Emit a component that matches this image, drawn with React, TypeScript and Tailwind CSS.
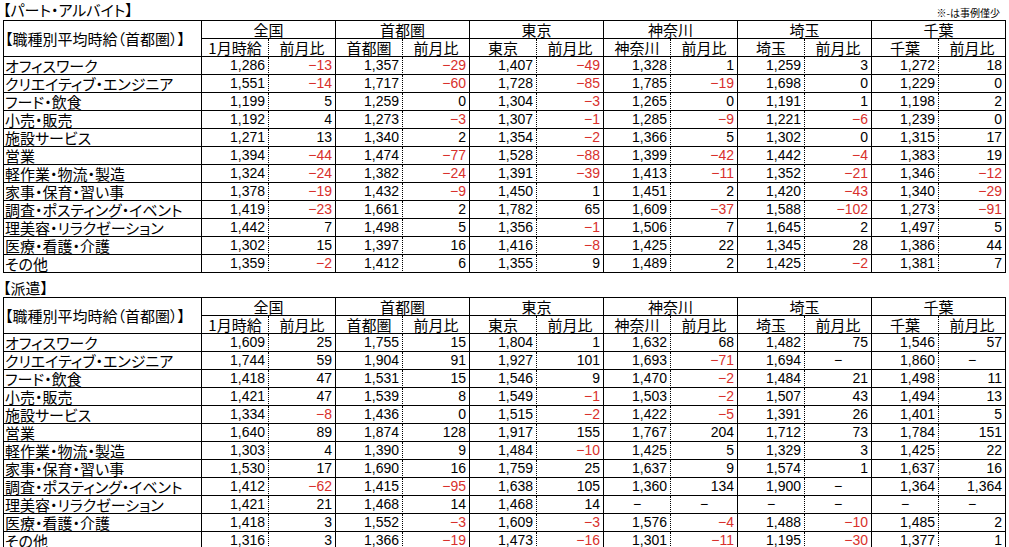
const regions = ["全国", "首都圏", "東京", "神奈川", "埼玉", "千葉"];
const firstHeads = ["1月時給", "首都圏", "東京", "神奈川", "埼玉", "千葉"];

// values: "-" = 事例僅少, leading "-" = negative (red)
const partRows: string[][] = [
  ["オフィスワーク", "1,286", "-13", "1,357", "-29", "1,407", "-49", "1,328", "1", "1,259", "3", "1,272", "18"],
  ["クリエイティブ・エンジニア", "1,551", "-14", "1,717", "-60", "1,728", "-85", "1,785", "-19", "1,698", "0", "1,229", "0"],
  ["フード・飲食", "1,199", "5", "1,259", "0", "1,304", "-3", "1,265", "0", "1,191", "1", "1,198", "2"],
  ["小売・販売", "1,192", "4", "1,273", "-3", "1,307", "-1", "1,285", "-9", "1,221", "-6", "1,239", "0"],
  ["施設サービス", "1,271", "13", "1,340", "2", "1,354", "-2", "1,366", "5", "1,302", "0", "1,315", "17"],
  ["営業", "1,394", "-44", "1,474", "-77", "1,528", "-88", "1,399", "-42", "1,442", "-4", "1,383", "19"],
  ["軽作業・物流・製造", "1,324", "-24", "1,382", "-24", "1,391", "-39", "1,413", "-11", "1,352", "-21", "1,346", "-12"],
  ["家事・保育・習い事", "1,378", "-19", "1,432", "-9", "1,450", "1", "1,451", "2", "1,420", "-43", "1,340", "-29"],
  ["調査・ポスティング・イベント", "1,419", "-23", "1,661", "2", "1,782", "65", "1,609", "-37", "1,588", "-102", "1,273", "-91"],
  ["理美容・リラクゼーション", "1,442", "7", "1,498", "5", "1,356", "-1", "1,506", "7", "1,645", "2", "1,497", "5"],
  ["医療・看護・介護", "1,302", "15", "1,397", "16", "1,416", "-8", "1,425", "22", "1,345", "28", "1,386", "44"],
  ["その他", "1,359", "-2", "1,412", "6", "1,355", "9", "1,489", "2", "1,425", "-2", "1,381", "7"],
];

const hakenRows: string[][] = [
  ["オフィスワーク", "1,609", "25", "1,755", "15", "1,804", "1", "1,632", "68", "1,482", "75", "1,546", "57"],
  ["クリエイティブ・エンジニア", "1,744", "59", "1,904", "91", "1,927", "101", "1,693", "-71", "1,694", "-", "1,860", "-"],
  ["フード・飲食", "1,418", "47", "1,531", "15", "1,546", "9", "1,470", "-2", "1,484", "21", "1,498", "11"],
  ["小売・販売", "1,421", "47", "1,539", "8", "1,549", "-1", "1,503", "-2", "1,507", "43", "1,494", "13"],
  ["施設サービス", "1,334", "-8", "1,436", "0", "1,515", "-2", "1,422", "-5", "1,391", "26", "1,401", "5"],
  ["営業", "1,640", "89", "1,874", "128", "1,917", "155", "1,767", "204", "1,712", "73", "1,784", "151"],
  ["軽作業・物流・製造", "1,303", "4", "1,390", "9", "1,484", "-10", "1,425", "5", "1,329", "3", "1,425", "22"],
  ["家事・保育・習い事", "1,530", "17", "1,690", "16", "1,759", "25", "1,637", "9", "1,574", "1", "1,637", "16"],
  ["調査・ポスティング・イベント", "1,412", "-62", "1,415", "-95", "1,638", "105", "1,360", "134", "1,900", "-", "1,364", "1,364"],
  ["理美容・リラクゼーション", "1,421", "21", "1,468", "14", "1,468", "14", "-", "-", "-", "-", "-", "-"],
  ["医療・看護・介護", "1,418", "3", "1,552", "-3", "1,609", "-3", "1,576", "-4", "1,488", "-10", "1,485", "2"],
  ["その他", "1,316", "3", "1,366", "-19", "1,473", "-16", "1,301", "-11", "1,195", "-30", "1,377", "1"],
];

const jp = "font-['Noto_Sans_CJK_JP',sans-serif] [font-feature-settings:'palt']";
const num = "font-['Liberation_Sans',Arial,sans-serif] text-[14px]";
const dotted = "border-r border-b border-black [border-right-style:dotted]!";
const solid = "border-r border-b border-black";

function Value({ v, first }: { v: string; first: boolean }) {
  const edge = first ? dotted : solid;
  if (v === "-") {
    return <td className={`${edge} ${num} p-0 text-center`}>−</td>;
  }
  const neg = v.startsWith("-");
  return (
    <td className={`${edge} ${num} p-0 pr-[3px] text-right ${neg ? "text-[#d8302c]" : "text-black"}`}>
      {neg ? "−" + v.slice(1) : v}
    </td>
  );
}

function WageTable({ rows }: { rows: string[][] }) {
  return (
    <table className="ml-[3px] w-[1002px] table-fixed border-separate border-spacing-0 border-l border-t border-black leading-[17px] text-black">
      <colgroup>
        <col className="w-[198px]" />
        {Array.from({ length: 12 }).map((_, i) => (
          <col key={i} className="w-[67px]" />
        ))}
      </colgroup>
      <thead>
        <tr>
          <th rowSpan={2} className={`${solid} ${jp} p-0 pl-[1px] text-left text-[15px] font-normal whitespace-nowrap`}>
            【職種別平均時給（首都圏）】
          </th>
          {regions.map((r) => (
            <th key={r} colSpan={2} className={`${solid} ${jp} p-0 text-center text-[15px] font-normal`}>
              {r}
            </th>
          ))}
        </tr>
        <tr>
          {firstHeads.map((h, i) => [
            <th key={`a${i}`} className={`${dotted} ${jp} p-0 text-center text-[15px] font-normal`}>
              {h}
            </th>,
            <th key={`b${i}`} className={`${solid} ${jp} p-0 text-center text-[15px] font-normal`}>
              前月比
            </th>,
          ])}
        </tr>
      </thead>
      <tbody>
        {rows.map((row) => (
          <tr key={row[0]}>
            <td className={`${solid} ${jp} p-0 pl-[1px] text-left text-[15px] whitespace-nowrap`}>
              {row[0]}
            </td>
            {row.slice(1).map((v, i) => (
              <Value key={i} v={v} first={i % 2 === 0} />
            ))}
          </tr>
        ))}
      </tbody>
    </table>
  );
}

export default function App() {
  return (
    <div className="w-[1009px] h-[547px] overflow-hidden bg-white">
      <div className="flex h-[20px] items-end justify-between pl-[3px] pr-[9px]">
        <div className={`${jp} text-[15px] leading-[18px] pb-[1px]`}>【パート・アルバイト】</div>
        <div className={`${jp} text-[10px] leading-[12px] pb-[1px]`}>※-は事例僅少</div>
      </div>
      <WageTable rows={partRows} />
      <div className={`${jp} h-[24px] pl-[3px] pt-[6px] text-[15px] leading-[17px]`}>【派遣】</div>
      <WageTable rows={hakenRows} />
    </div>
  );
}
